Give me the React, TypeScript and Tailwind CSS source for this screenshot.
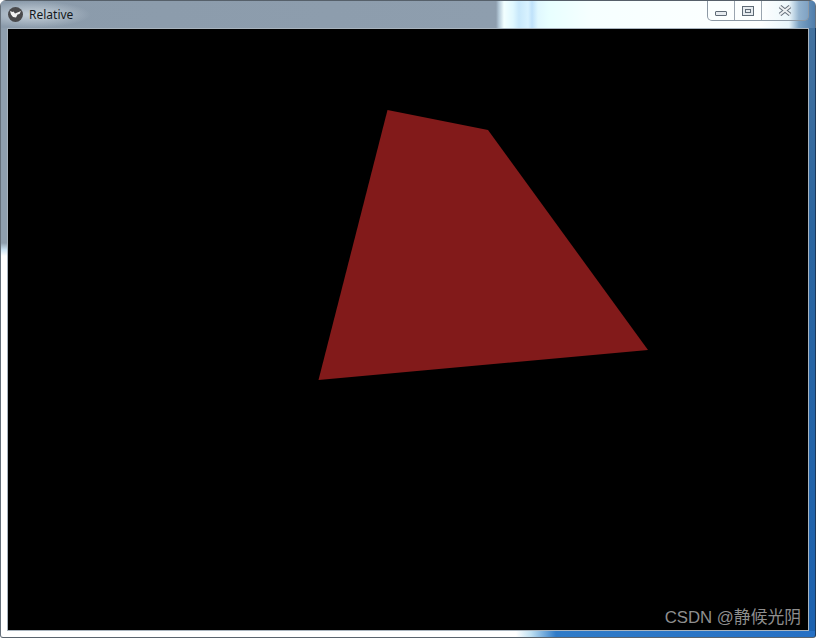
function App() {
  return (
    <div className="flex h-[638px] w-[816px] flex-col overflow-hidden rounded-t-[6px] bg-white font-['Liberation_Sans',sans-serif]">
      {/* title bar */}
      <div className="relative flex h-[28px] shrink-0 items-center border-x border-t border-x-[#66717c] border-t-[#56606a] pl-[7px] bg-[linear-gradient(90deg,#8b9bab_0,#8e9eae_495px,#b5cad9_498px,#f2ffff_503px,#e0f8ff_512px,#c8e8fb_518px,#d8f2ff_527px,#bfe2fb_531px,#e0f8ff_537px,#e8ffff_548px,#f6ffff_590px,#fdffff_760px,#e8f5fb_788px,#7ba2c4_798px,#4a78a8_816px)]">
        <div className="absolute left-0 top-0 h-[27px] w-[90px] bg-[radial-gradient(ellipse_at_35%_50%,#c8d3dc_0,#c8d3dc00_70%)]" />
        <svg className="relative h-[15px] w-[15px]" viewBox="0 0 15 15">
          <circle cx="7.5" cy="7.5" r="7.5" fill="#4a4a4c" />
          <path d="M2 4 L4.5 5 L5.5 4.5 L7 6.5 L13 4 L11.5 7 L9.5 7.5 L8 10.5 L5 10 L3 7.5 Z" fill="#f2f2f2" />
        </svg>
        <span className="relative ml-[6px] font-['Noto_Sans',sans-serif] text-[12px] leading-none text-[#14181c]">Relative</span>

        {/* caption buttons */}
        <div className="absolute right-[6px] top-0 flex h-[20px] w-[102px] rounded-b-[5px] border border-t-0 border-[#8d99a5] bg-[#ffffff30]">
          <div className="flex h-full w-[27px] items-end justify-center border-r border-[#9aa5b0] pb-[4px]">
            <div className="h-[5px] w-[12px] rounded-[1px] border border-[#5f6b76] bg-[#e6ebef]" />
          </div>
          <div className="flex h-full w-[27px] items-center justify-center border-r border-[#9aa5b0]">
            <div className="flex h-[10px] w-[12px] items-center justify-center border border-[#5f6b76] bg-[#e6ebef]">
              <div className="h-[4px] w-[6px] border border-[#5f6b76]" />
            </div>
          </div>
          <div className="flex flex-1 items-center justify-center">
            <svg className="h-[11px] w-[14px]" viewBox="0 0 14 11">
              <path d="M2 1.5 L12 9.5 M12 1.5 L2 9.5" stroke="#6a7580" strokeWidth="4" />
              <path d="M2 1.5 L12 9.5 M12 1.5 L2 9.5" stroke="#eef1f3" strokeWidth="2" />
            </svg>
          </div>
        </div>
      </div>

      {/* frame sides and client area */}
      <div className="flex min-h-0 flex-1">
        <div className="w-[7px] shrink-0 border-l border-[#66717c] bg-[linear-gradient(180deg,#8f9fae_0,#8f9fae_215px,#cfe6f5_222px,#ffffff_228px)]" />
        <div className="relative flex-1 border border-[#a9b4be] bg-black">
          <svg className="h-full w-full" viewBox="8 29 800 601">
            <polygon points="387.5,110 488,130 648,350 318.5,380" fill="#821a1a" />
          </svg>
          <span className="absolute bottom-[1px] right-[7px] font-['Liberation_Sans','Noto_Sans_CJK_SC',sans-serif] text-[16.8px] leading-[22px] text-[#8f8f8f]">
            CSDN @静候光阴
          </span>
        </div>
        <div className="w-[7px] shrink-0 border-r border-[#1c3a5c] bg-[linear-gradient(180deg,#44729f_0,#2b659f_200px,#1c62b0_100%)]" />
      </div>

      {/* bottom frame */}
      <div className="h-[7px] shrink-0 rounded-b-[3px] border-x border-b border-x-[#66717c] border-r-[#1c3a5c] border-b-[#5a646e] bg-[linear-gradient(90deg,#ffffff_0,#ffffff_515px,#bfe0f2_530px,#2f7bc8_555px,#2670c4_100%)]" />
    </div>
  );
}

export default App;
